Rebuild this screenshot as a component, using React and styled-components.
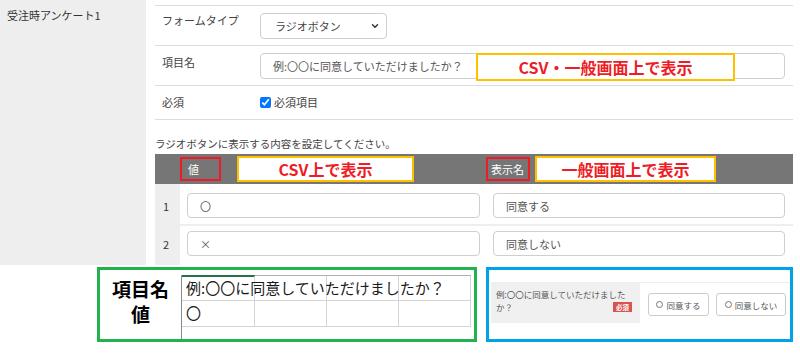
import styled, { createGlobalStyle } from 'styled-components';

const GlobalStyle = createGlobalStyle`
  body {
    margin: 0;
    background: #ffffff;
    font-family: "Noto Sans CJK JP", "Noto Sans", sans-serif;
    color: #333;
  }
  * { box-sizing: border-box; }
`;

const Page = styled.div`
  width: 800px;
  height: 356px;
  overflow: hidden;
  font-size: 11px;
`;

const Top = styled.div`
  display: flex;
  height: 265px;
`;

const SideLabel = styled.div`
  width: 146px;
  background: #eeeeee;
  padding: 7px 0 0 7px;
  font-size: 11px;
  color: #333;
`;

const Main = styled.div`
  flex: 1;
  margin: 5px 7px 0 9px;
  display: flex;
  flex-direction: column;
`;

const FormRow = styled.div`
  display: grid;
  grid-template-columns: 105px 1fr;
  height: ${(p) => p.$h}px;
  border-top: 1px solid #dcdcdc;
  position: relative;
`;

const RowLabel = styled.div`
  padding: ${(p) => p.$pt || 8}px 0 0 7px;
  color: #444;
`;

const Field = styled.div`
  padding: 7px 8px 0 0;
  display: flex;
  align-items: flex-start;
`;

const Select = styled.div`
  width: 127px;
  height: 26px;
  border: 1px solid #cfcfcf;
  border-radius: 4px;
  display: flex;
  align-items: center;
  justify-content: space-between;
  padding: 0 6px 0 14px;
  color: #444;
  font-size: 11px;
`;

const Input = styled.div`
  flex: 1;
  height: ${(p) => p.$h || 26}px;
  border: 1px solid #cfcfcf;
  border-radius: 4px;
  display: flex;
  align-items: center;
  padding-left: 12px;
  color: #555;
  font-size: 11px;
`;

const CheckWrap = styled.label`
  display: flex;
  align-items: center;
  gap: 3px;
  margin-top: 1px;
  color: #444;
  input {
    margin: 0;
    width: 11px;
    height: 11px;
  }
`;

const Note = styled.div`
  border-top: 1px solid #dcdcdc;
  height: 35px;
  padding-top: 16px;
  font-size: 10.5px;
  color: #444;
`;

const TableHead = styled.div`
  display: grid;
  grid-template-columns: 25px 306px 1fr;
  height: 30px;
  background: #767676;
  align-items: center;
`;

const HeadCell = styled.div`
  display: flex;
  align-items: center;
  gap: ${(p) => p.$gap}px;
`;

const RedTag = styled.div`
  width: ${(p) => p.$w}px;
  height: 24px;
  border: 2px solid #ee1c24;
  color: #fff;
  font-size: 11px;
  display: flex;
  align-items: center;
  padding: 0 ${(p) => p.$px}px;
`;

const YellowBox = styled.div`
  width: ${(p) => p.$w}px;
  height: ${(p) => p.$h || 26}px;
  border: 2px solid #ffc000;
  background: #fff;
  color: #ee1c24;
  font-weight: 700;
  font-size: 16px;
  display: flex;
  align-items: center;
  justify-content: center;
  font-family: "Noto Sans CJK JP", "Liberation Sans", sans-serif;
`;

const FloatYellow = styled(YellowBox)`
  position: absolute;
  left: 321px;
  top: 7px;
`;

const TableRow = styled.div`
  display: grid;
  grid-template-columns: 25px 306px 1fr;
  height: ${(p) => p.$h}px;
  border-bottom: ${(p) => (p.$last ? 'none' : '2px solid #eeeeee')};
`;

const IndexCell = styled.div`
  background: #eeeeee;
  padding: ${(p) => p.$pt}px 0 0 8px;
  color: #333;
`;

const InputCell = styled.div`
  padding: ${(p) => p.$pt}px ${(p) => p.$pr}px 0 7px;
  display: flex;
  align-items: flex-start;
`;

const Bottom = styled.div`
  display: flex;
  gap: 9px;
  padding: 2px 0 0 97px;
`;

const GreenBox = styled.div`
  width: 380px;
  height: 75px;
  border: 3px solid #22b14c;
  display: flex;
  padding: 5px 0 0 0;
`;

const BigLabels = styled.div`
  width: 81px;
  display: flex;
  flex-direction: column;
  align-items: center;
  font-size: 19px;
  font-weight: 700;
  color: #000;
  line-height: 25px;
  padding-top: 1px;
`;

const Sheet = styled.div`
  display: grid;
  grid-template-columns: 73px 72px 72px 72px;
  grid-template-rows: 25px 26px;
  border-left: 1px solid #8a8a8a;
  border-top: 1px solid #b0b0b0;
  position: relative;
`;

const SheetCell = styled.div`
  border-right: 1px solid #d4d4d4;
  border-bottom: 1px solid #d4d4d4;
  ${(p) => p.$active && 'border-top: 2px solid #217346; margin-top: -1px;'}
`;

const SheetText = styled.div`
  position: absolute;
  left: 4px;
  top: ${(p) => p.$top}px;
  font-size: 15px;
  color: #1a1a1a;
  white-space: nowrap;
  line-height: 22px;
`;

const BlueBox = styled.div`
  width: 307px;
  height: 75px;
  border: 3px solid #00a2e8;
  padding: 12px 0 0 2px;
`;

const Preview = styled.div`
  display: flex;
  border-top: 1px solid #eeeeee;
  height: 41px;
`;

const PreviewLabel = styled.div`
  width: 149px;
  background: #f0f0f0;
  padding: 5px 4px 0 5px;
  font-size: 8.5px;
  line-height: 13px;
  color: #555;
  position: relative;
  white-space: nowrap;
`;

const Badge = styled.span`
  position: absolute;
  right: 8px;
  bottom: 11px;
  background: #d9534f;
  color: #fff;
  font-size: 6.5px;
  padding: 1px 3px;
  line-height: 8px;
  font-weight: 700;
`;

const Choices = styled.div`
  display: flex;
  gap: 7px;
  padding: 10px 0 0 8px;
`;

const ChoiceButton = styled.div`
  width: ${(p) => p.$w}px;
  height: 23px;
  border: 1px solid #cccccc;
  border-radius: 3px;
  display: flex;
  align-items: center;
  justify-content: center;
  gap: 3px;
  font-size: 8.5px;
  color: #555;
`;

const Dot = styled.span`
  width: 7px;
  height: 7px;
  border: 1px solid #777;
  border-radius: 50%;
`;

const Chevron = () => (
  <svg width="10" height="10" viewBox="0 0 24 24" fill="none" stroke="#333" strokeWidth="3.5" strokeLinecap="round" strokeLinejoin="round">
    <path d="M6 9l6 6 6-6" />
  </svg>
);

const rows = [
  { n: 1, value: '〇', label: '同意する', h: 42, pt: 9 },
  { n: 2, value: '×', label: '同意しない', h: 39, pt: 5, last: true },
];

export default function App() {
  return (
    <Page>
      <GlobalStyle />
      <Top>
        <SideLabel>受注時アンケート1</SideLabel>
        <Main>
          <FormRow $h={40}>
            <RowLabel $pt={6}>フォームタイプ</RowLabel>
            <Field>
              <Select>
                ラジオボタン
                <Chevron />
              </Select>
            </Field>
          </FormRow>
          <FormRow $h={40}>
            <RowLabel>項目名</RowLabel>
            <Field>
              <Input>例:〇〇に同意していただけましたか？</Input>
            </Field>
            <FloatYellow $w={259} $h={28}>CSV・一般画面上で表示</FloatYellow>
          </FormRow>
          <FormRow $h={34}>
            <RowLabel>必須</RowLabel>
            <Field>
              <CheckWrap>
                <input type="checkbox" defaultChecked readOnly />
                必須項目
              </CheckWrap>
            </Field>
          </FormRow>
          <Note>ラジオボタンに表示する内容を設定してください。</Note>
          <TableHead>
            <div />
            <HeadCell $gap={16}>
              <RedTag $w={41} $px={6}>値</RedTag>
              <YellowBox $w={177}>CSV上で表示</YellowBox>
            </HeadCell>
            <HeadCell $gap={5}>
              <RedTag $w={44} $px={3}>表示名</RedTag>
              <YellowBox $w={181}>一般画面上で表示</YellowBox>
            </HeadCell>
          </TableHead>
          {rows.map((r) => (
            <TableRow key={r.n} $h={r.h} $last={r.last}>
              <IndexCell $pt={r.pt + 5}>{r.n}</IndexCell>
              <InputCell $pt={r.pt} $pr={6}>
                <Input $h={25}>{r.value}</Input>
              </InputCell>
              <InputCell $pt={r.pt} $pr={8}>
                <Input $h={25}>{r.label}</Input>
              </InputCell>
            </TableRow>
          ))}
        </Main>
      </Top>
      <Bottom>
        <GreenBox>
          <BigLabels>
            <span>項目名</span>
            <span>値</span>
          </BigLabels>
          <Sheet>
            <SheetCell $active />
            <SheetCell />
            <SheetCell />
            <SheetCell />
            <SheetCell />
            <SheetCell />
            <SheetCell />
            <SheetCell />
            <SheetText $top={1}>例:〇〇に同意していただけましたか？</SheetText>
            <SheetText $top={26}>〇</SheetText>
          </Sheet>
        </GreenBox>
        <BlueBox>
          <Preview>
            <PreviewLabel>
              例:〇〇に同意していただけました
              <br />
              か？
              <Badge>必須</Badge>
            </PreviewLabel>
            <Choices>
              <ChoiceButton $w={61}>
                <Dot />
                同意する
              </ChoiceButton>
              <ChoiceButton $w={70}>
                <Dot />
                同意しない
              </ChoiceButton>
            </Choices>
          </Preview>
        </BlueBox>
      </Bottom>
    </Page>
  );
}
